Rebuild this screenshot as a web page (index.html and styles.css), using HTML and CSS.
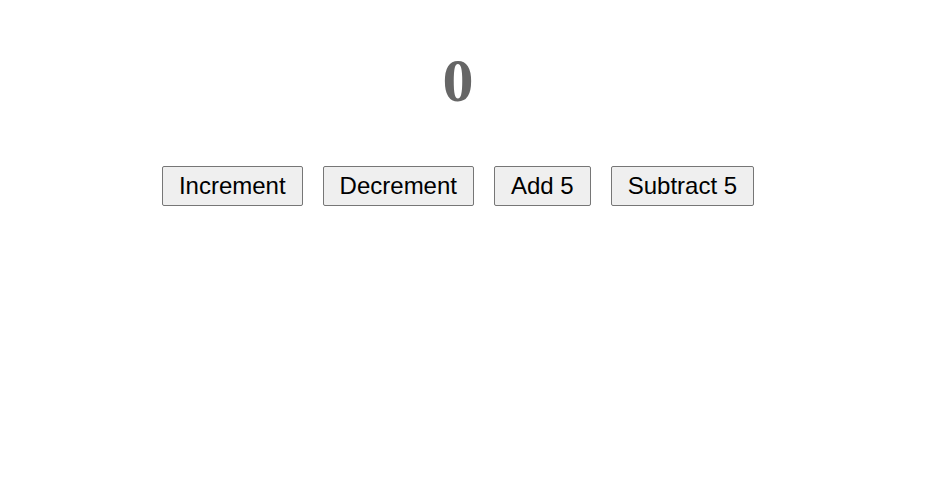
FILE: index.html
```html
<!DOCTYPE html>
<html>
<head>
<meta charset="utf-8">
<link rel="stylesheet" href="styles.css">
</head>
<body>
<div class="app">
  <h1 class="count">0</h1>
  <div class="buttons">
    <button class="btn">Increment</button>
    <button class="btn">Decrement</button>
    <button class="btn">Add 5</button>
    <button class="btn">Subtract 5</button>
  </div>
</div>
</body>
</html>
```
FILE: styles.css
```css
html, body {
  margin: 0;
  background: #fff;
}
.app {
  display: flex;
  flex-direction: column;
  align-items: center;
  padding-right: 14px;
  padding-top: 40px;
}
.count {
  margin: 0;
  font-family: "Liberation Serif", serif;
  font-weight: bold;
  font-size: 62px;
  line-height: 80px;
  color: #666;
}
.buttons {
  display: flex;
  gap: 20px;
  margin-top: 46px;
}
.btn {
  font-family: "Liberation Sans", Arial, sans-serif;
  font-size: 24px;
  height: 40px;
  padding: 0 16px;
  background: #efefef;
  border: 1px solid #767676;
  border-radius: 2px;
  color: #000;
}
```
